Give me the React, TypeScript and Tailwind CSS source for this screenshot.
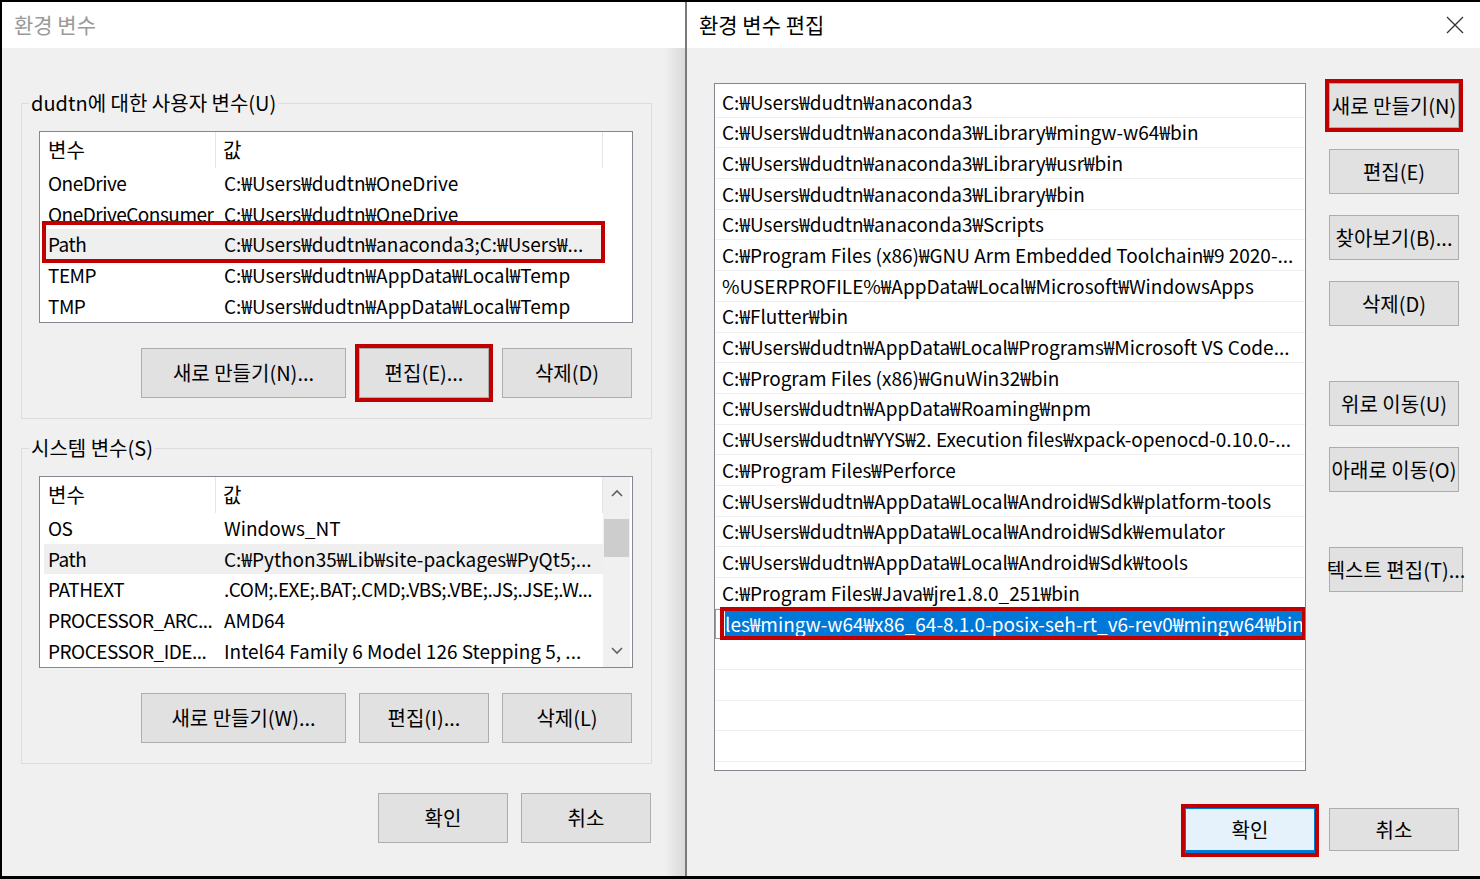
import React from 'react';

const userVars: [string, string][] = [
    ["OneDrive", "C:₩Users₩dudtn₩OneDrive"],
    ["OneDriveConsumer", "C:₩Users₩dudtn₩OneDrive"],
    ["Path", "C:₩Users₩dudtn₩anaconda3;C:₩Users₩..."],
    ["TEMP", "C:₩Users₩dudtn₩AppData₩Local₩Temp"],
    ["TMP", "C:₩Users₩dudtn₩AppData₩Local₩Temp"],
];

const systemVars: [string, string][] = [
    ["OS", "Windows_NT"],
    ["Path", "C:₩Python35₩Lib₩site-packages₩PyQt5;..."],
    ["PATHEXT", ".COM;.EXE;.BAT;.CMD;.VBS;.VBE;.JS;.JSE;.W..."],
    ["PROCESSOR_ARC...", "AMD64"],
    ["PROCESSOR_IDE...", "Intel64 Family 6 Model 126 Stepping 5, ..."],
];

const paths = [
    "C:₩Users₩dudtn₩anaconda3",
    "C:₩Users₩dudtn₩anaconda3₩Library₩mingw-w64₩bin",
    "C:₩Users₩dudtn₩anaconda3₩Library₩usr₩bin",
    "C:₩Users₩dudtn₩anaconda3₩Library₩bin",
    "C:₩Users₩dudtn₩anaconda3₩Scripts",
    "C:₩Program Files (x86)₩GNU Arm Embedded Toolchain₩9 2020-...",
    "%USERPROFILE%₩AppData₩Local₩Microsoft₩WindowsApps",
    "C:₩Flutter₩bin",
    "C:₩Users₩dudtn₩AppData₩Local₩Programs₩Microsoft VS Code...",
    "C:₩Program Files (x86)₩GnuWin32₩bin",
    "C:₩Users₩dudtn₩AppData₩Roaming₩npm",
    "C:₩Users₩dudtn₩YYS₩2. Execution files₩xpack-openocd-0.10.0-...",
    "C:₩Program Files₩Perforce",
    "C:₩Users₩dudtn₩AppData₩Local₩Android₩Sdk₩platform-tools",
    "C:₩Users₩dudtn₩AppData₩Local₩Android₩Sdk₩emulator",
    "C:₩Users₩dudtn₩AppData₩Local₩Android₩Sdk₩tools",
    "C:₩Program Files₩Java₩jre1.8.0_251₩bin",
];

// red annotation box drawn over a control
function Mark() {
    return <div className="pointer-events-none absolute -inset-[4px] border-[4px] border-[#c00000]" />;
}

function Btn({ label, w = "w-[130px]", h = "h-[50px]", marked = false }: { label: string; w?: string; h?: string; marked?: boolean }) {
    return (
        <div className={`relative ${w} ${h} shrink-0`}>
            <div className="flex h-full w-full items-center justify-center whitespace-nowrap border border-[#adadad] bg-[#e1e1e1] text-[20px] leading-none">
                {label}
            </div>
            {marked && <Mark />}
        </div>
    );
}

function Chevron({ up }: { up: boolean }) {
    return (
        <svg width="12" height="8" viewBox="0 0 12 8" className="text-[#606060]">
            <path d={up ? "M1 7 L6 2 L11 7" : "M1 1 L6 6 L11 1"} fill="none" stroke="currentColor" strokeWidth="1.6" />
        </svg>
    );
}

function VarList({ rows, scroll, markPath }: { rows: [string, string][]; scroll?: boolean; markPath?: boolean }) {
    return (
        <div className="flex h-[192px] border border-[#828790] bg-white">
            <div className="w-[563px] shrink-0">
                <div className="flex h-[36px] items-center text-[20px]">
                    <div className="flex h-full w-[176px] items-center border-r border-[#e5e5e5] pl-[8px]">변수</div>
                    <div className="flex h-full flex-1 items-center border-r border-[#e5e5e5] pl-[7px]">값</div>
                </div>
                {rows.map(([k, v]) => (
                    <div
                        key={k}
                        className={`relative ml-[4px] flex h-[30.7px] items-center text-[19px] ${k === "Path" ? "bg-[#efefef]" : ""}`}
                    >
                        <div className="w-[172px] overflow-hidden whitespace-nowrap pl-[4px] tracking-[-0.5px]">{k}</div>
                        <div className={`flex-1 overflow-hidden whitespace-nowrap pl-[8px] ${v.length > 43 ? "tracking-[-0.5px]" : ""}`}>{v}</div>
                        {markPath && k === "Path" && <div className="pointer-events-none absolute -left-[2px] -right-[2px] -top-[8px] -bottom-[3px] border-[4px] border-[#c00000]" />}
                    </div>
                ))}
            </div>
            {scroll && (
                <div className="flex w-[27px] flex-col items-center bg-[#f0f0f0] pt-[12px]">
                    <Chevron up />
                    <div className="mt-[22px] h-[38px] w-[25px] bg-[#cdcdcd]" />
                    <div className="flex-1" />
                    <div className="mb-[12px]"><Chevron up={false} /></div>
                </div>
            )}
        </div>
    );
}

function Group({ title, children }: { title: string; children: React.ReactNode }) {
    return (
        <fieldset className="w-[631px] border border-[#dcdcdc] pl-[17px] pr-[18px] pb-[20px]">
            <legend className="-ml-[10px] px-[2px] text-[20px] leading-[26px]">{title}</legend>
            {children}
        </fieldset>
    );
}

export default function App() {
    return (
        <div className="flex h-[879px] w-[1480px] bg-black pl-[2px] pt-[2px] pb-[3px] font-['Noto_Sans_CJK_KR','Noto_Sans',sans-serif] text-black">
            {/* 환경 변수 */}
            <div className="flex w-[683px] flex-col bg-[#f0f0f0]">
                <div className="flex h-[46px] items-center bg-white pl-[12px] text-[21px] text-[#9a9a9a]">환경 변수</div>
                <div className="flex flex-1 flex-col bg-gradient-to-r from-[#f0f0f0] from-[97%] to-[#d9d9d9] pl-[19px] pt-[42px]">
                    <Group title="dudtn에 대한 사용자 변수(U)">
                        <div className="mt-[15px]">
                            <VarList rows={userVars} markPath />
                        </div>
                        <div className="mt-[25px] flex justify-end gap-[13px] pr-[1px]">
                            <Btn label="새로 만들기(N)..." w="w-[205px]" />
                            <Btn label="편집(E)..." marked />
                            <Btn label="삭제(D)" />
                        </div>
                    </Group>
                    <div className="mt-[16px]">
                        <Group title="시스템 변수(S)">
                            <div className="mt-[15px]">
                                <VarList rows={systemVars} scroll />
                            </div>
                            <div className="mt-[25px] flex justify-end gap-[13px] pr-[1px]">
                                <Btn label="새로 만들기(W)..." w="w-[205px]" />
                                <Btn label="편집(I)..." />
                                <Btn label="삭제(L)" />
                            </div>
                        </Group>
                    </div>
                    <div className="mt-[29px] flex w-[631px] justify-end gap-[13px] pr-[1px]">
                        <Btn label="확인" />
                        <Btn label="취소" />
                    </div>
                </div>
            </div>
            <div className="w-[2px] bg-[#7a7a7a]" />

            {/* 환경 변수 편집 */}
            <div className="flex flex-1 flex-col bg-[#f0f0f0]">
                <div className="flex h-[46px] items-center justify-between bg-white pl-[12px] pr-[16px] text-[21px]">
                    <span>환경 변수 편집</span>
                    <svg width="18" height="18" viewBox="0 0 18 18">
                        <path d="M1 1 L17 17 M17 1 L1 17" stroke="#333" strokeWidth="1.3" fill="none" />
                    </svg>
                </div>
                <div className="flex pl-[27px] pt-[35px]">
                    <div className="flex h-[688px] w-[592px] flex-col overflow-hidden border border-[#828790] bg-white pt-[3px]">
                        {paths.map((p) => (
                            <div key={p} className="flex h-[30.7px] shrink-0 items-center whitespace-nowrap border-b border-[#f0f0f0] pl-[7px] text-[19px]">
                                {p}
                            </div>
                        ))}
                        <div className="relative flex h-[30.7px] shrink-0 items-center border-b border-[#f0f0f0]">
                            <div className="flex h-[30px] w-full items-center overflow-hidden border border-[#9a9a9a] bg-white pl-[9px]">
                                <span className="whitespace-nowrap bg-[#0078d7] pr-[4px] text-[19px] leading-[27px] text-white">
                                    les₩mingw-w64₩x86_64-8.1.0-posix-seh-rt_v6-rev0₩mingw64₩bin
                                </span>
                            </div>
                            <div className="pointer-events-none absolute left-[5px] -right-[1px] -top-[2px] -bottom-[2px] border-[4px] border-[#c00000]" />
                        </div>
                        {[0, 1, 2, 3, 4].map((i) => (
                            <div key={i} className="h-[30.7px] shrink-0 border-b border-[#f0f0f0]" />
                        ))}
                    </div>
                    <div className="ml-[23px] flex flex-col">
                        <div className="flex flex-col gap-[21px]">
                            <Btn label="새로 만들기(N)" w="w-[130px]" h="h-[45px]" marked />
                            <Btn label="편집(E)" h="h-[45px]" />
                            <Btn label="찾아보기(B)..." h="h-[45px]" />
                            <Btn label="삭제(D)" h="h-[45px]" />
                        </div>
                        <div className="mt-[55px] flex flex-col gap-[21px]">
                            <Btn label="위로 이동(U)" h="h-[45px]" />
                            <Btn label="아래로 이동(O)" h="h-[45px]" />
                        </div>
                        <div className="mt-[55px]">
                            <Btn label="텍스트 편집(T)..." w="w-[134px]" h="h-[45px]" />
                        </div>
                    </div>
                </div>
                <div className="mt-[37px] flex justify-end gap-[14px] pr-[21px]">
                    <div className="relative h-[45px] w-[130px]">
                        <div className="flex h-full w-full items-center justify-center border border-[#0078d7] border-b-[3px] bg-[#e5f1fb] text-[20px] leading-none">확인</div>
                        <Mark />
                    </div>
                    <Btn label="취소" h="h-[43px]" />
                </div>
            </div>
        </div>
    );
}
